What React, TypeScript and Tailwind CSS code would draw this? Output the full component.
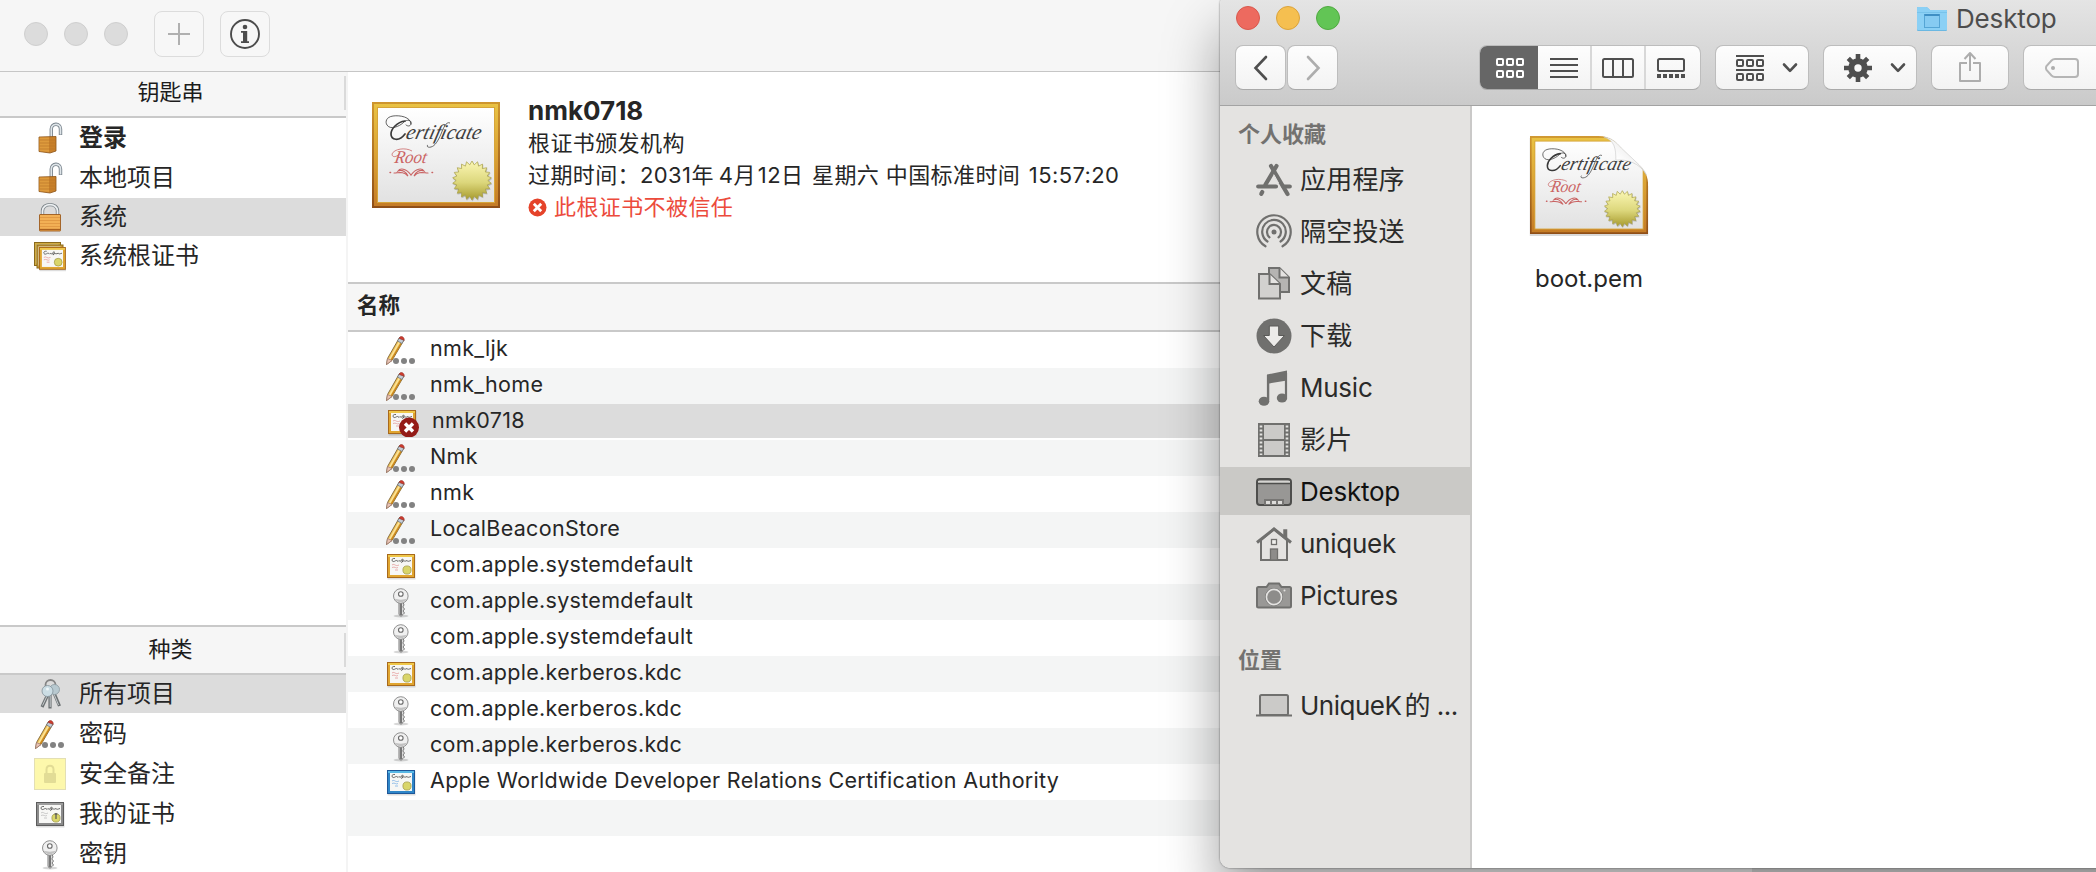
import React from "react";

const FONT = "font-['Inter','Noto_Sans_CJK_SC',sans-serif]";

/* ---------- shared drawings ---------- */

function sealPoints(cx: number, cy: number, r: number, inner: number, n: number) {
  const pts: string[] = [];
  for (let i = 0; i < n * 2; i++) {
    const rad = i % 2 === 0 ? r : inner;
    const a = (Math.PI * i) / n - Math.PI / 2;
    pts.push(`${(cx + rad * Math.cos(a)).toFixed(2)},${(cy + rad * Math.sin(a)).toFixed(2)}`);
  }
  return pts.join(" ");
}

function CertificateArt({ id }: { id: string }) {
  return (
    <>
      <defs>
        <linearGradient id={`${id}f`} x1="0" y1="0" x2="0" y2="1">
          <stop offset="0" stopColor="#e9c243" />
          <stop offset="0.5" stopColor="#dba234" />
          <stop offset="1" stopColor="#c57c26" />
        </linearGradient>
        <linearGradient id={`${id}e`} x1="0" y1="0" x2="0" y2="1">
          <stop offset="0" stopColor="#cf962e" />
          <stop offset="1" stopColor="#8f4e17" />
        </linearGradient>
        <linearGradient id={`${id}p`} x1="0" y1="0" x2="0" y2="1">
          <stop offset="0" stopColor="#ffffff" />
          <stop offset="1" stopColor="#e2e2e2" />
        </linearGradient>
        <linearGradient id={`${id}s`} x1="0" y1="0" x2="0" y2="1">
          <stop offset="0" stopColor="#fbf7b4" />
          <stop offset="0.55" stopColor="#dcd77c" />
          <stop offset="1" stopColor="#a79a2c" />
        </linearGradient>
      </defs>
      <rect width="128" height="106" fill={`url(#${id}e)`} />
      <rect x="2" y="2" width="124" height="102" fill={`url(#${id}f)`} />
      <rect x="5" y="5" width="118" height="96" fill="#d6a53a" />
      <rect x="6" y="6" width="116" height="94" fill={`url(#${id}p)`} />
    </>
  );
}

function CertificateContent({ id }: { id: string }) {
  return (
    <>
      <g fill="none" stroke="#3a3a3a" strokeWidth="0.8" strokeLinecap="round">
        <path d="M39 22C39 15 28 13 21 14C14 15 13 20 15 23C18 28 27 25 32 20C35 17 40 18 39 22C38 25 35 24 34 23" />
        <path d="M33 19C25 20 19 27 19 32C19 38 27 40 33 32" strokeWidth="1.700" />
      </g>
      <g transform="translate(33 37) skewX(-14)">
        <text fontSize="21" fontStyle="italic" fontFamily="Liberation Serif, serif" fill="#3f3f3f" textLength="75" lengthAdjust="spacingAndGlyphs">
          ertificate
        </text>
      </g>
      <path d="M78 21C74 19 71 27 69 32C66 39 63 44 59 45C56 46 54 44 56 43" fill="none" stroke="#444" strokeWidth="0.8" />
      <path d="M40 49C33 45 22 47 20 52C20 56 25 55 27 52" fill="none" stroke="#cb6a6a" strokeWidth="0.8" />
      <g transform="translate(22 61) skewX(-10)">
        <text fontSize="18" fontStyle="italic" fontFamily="Liberation Serif, serif" fill="#cb6464" textLength="32" lengthAdjust="spacingAndGlyphs">
          Root
        </text>
      </g>
      <g fill="none" stroke="#c96363" strokeWidth="1.1" strokeLinecap="round">
        <path d="M39 73C34 66 28 66 26 69C30 67 34 70 36 74C31 69 27 71 22 71" />
        <path d="M39 73C44 66 50 66 52 69C48 67 44 70 42 74C47 69 51 71 56 71" />
        <path d="M18 70.5h.6M60 70.5h.6" strokeWidth="1.4" />
      </g>
      <polygon points={sealPoints(100.5, 79.5, 20, 16.5, 22)} fill="#00000030" />
      <polygon points={sealPoints(100, 78.5, 19.5, 15.8, 22)} fill={`url(#${id}s)`} stroke="#a89f45" strokeWidth="0.7" />
    </>
  );
}

function LargeCertificate() {
  return (
    <svg className="h-[106px] w-[128px] shrink-0" viewBox="0 0 128 106">
      <CertificateArt id="big" />
      <CertificateContent id="big" />
    </svg>
  );
}

function FileCertificate() {
  return (
    <svg className="h-[102px] w-[124px]" viewBox="-3 -1 134 110">
      <defs>
        <clipPath id="fold">
          <path d="M0 0H74C88 0 94 8 100 15L119 33C125 39 128 44 128 54V106H0Z" />
        </clipPath>
        <linearGradient id="curl" x1="0" y1="1" x2="1" y2="0">
          <stop offset="0" stopColor="#d2d2d2" />
          <stop offset="0.35" stopColor="#ffffff" />
          <stop offset="1" stopColor="#dcdcdc" />
        </linearGradient>
      </defs>
      <path d="M0 2H74L128 54V108H0Z" fill="#00000026" />
      <g clipPath="url(#fold)">
        <CertificateArt id="file" />
        <CertificateContent id="file" />
      </g>
      <path d="M80 1C92 5 93 14 93 26C105 25 119 29 126 42C124 37 121 34 118 31L99 13C93 6 88 2 80 1Z" fill="url(#curl)" stroke="#c6c6c6" strokeWidth="0.6" />
    </svg>
  );
}

const certTone = {
  gold: { edge: "#a8691c", frame: "#e0a530", top: "#efc84a", ink: "#e59a9a" },
  blue: { edge: "#1d5799", frame: "#2f86c8", top: "#58b7e4", ink: "#7fb2e6" },
  gray: { edge: "#5c5c5c", frame: "#8b8b8b", top: "#9d9d9d", ink: "#bdbdbd" },
};

function SmallCertArt({ tone = "gold" }: { tone?: "gold" | "blue" | "gray" }) {
  const c = certTone[tone];
  return (
    <>
      <rect x="0.5" y="1" width="28" height="24.5" fill="#00000022" />
      <rect width="28" height="24" fill={c.edge} />
      <rect x="1" y="1" width="26" height="22" fill={c.frame} />
      <rect x="1" y="1" width="26" height="2" fill={c.top} />
      <rect x="3" y="3" width="22" height="18" fill="#f7f7f5" />
      <path d="M8 4.5C5 4 4 6.500 6 7.500C8 8 9 5 11 7.500C12 5.500 13 8 14 7C15 5 16 4 16 6C15 9 14 9 15 7.500C17 6 18 8 20 6.500C21 8 22 7 24 6.500" fill="none" stroke="#555" strokeWidth="0.9" />
      <path d="M5 11C8 9 8 13 12 11M5 13.500C8 12 9 15 11 13.500M8 16h3" fill="none" stroke={c.ink} strokeWidth="0.8" />
      <circle cx="20" cy="16" r="4.100" fill="#d9d56a" stroke="#9c9540" strokeWidth="0.7" />
      {tone === "gray" && <path d="M20 11v6M18.500 12h3" stroke="#555" strokeWidth="1.200" />}
    </>
  );
}

function CertIcon({ tone = "gold" }: { tone?: "gold" | "blue" | "gray" }) {
  return (
    <svg className="h-[32px] w-[32px] shrink-0" viewBox="-2 -4 32 32">
      <SmallCertArt tone={tone} />
    </svg>
  );
}

function BadCertIcon() {
  return (
    <svg className="h-[32px] w-[34px] shrink-0" viewBox="-3 -5 34 32">
      <SmallCertArt />
      <circle cx="21" cy="17.5" r="10" fill="#941b17" />
      <path d="M17 13.500L25 21.500M25 13.500L17 21.500" stroke="#fff" strokeWidth="3.4" />
    </svg>
  );
}

function CertStackIcon() {
  return (
    <svg className="h-[32px] w-[32px] shrink-0" viewBox="0 0 32 32">
      <rect x="0" y="2" width="27" height="24" fill="#8a6a1c" />
      <rect x="1" y="3" width="25" height="22" fill="#d0ac42" />
      <rect x="2.500" y="4.500" width="22" height="19" fill="#eceae2" />
      <rect x="2.500" y="4.500" width="27" height="24" fill="#8a6a1c" />
      <rect x="3.500" y="5.500" width="25" height="22" fill="#c99a34" />
      <rect x="4.500" y="6.500" width="22" height="19" fill="#dcd9cf" />
      <g transform="translate(5 7) scale(0.96 0.95)">
        <SmallCertArt />
      </g>
    </svg>
  );
}

function PasswordIcon() {
  return (
    <svg className="h-[32px] w-[32px] shrink-0" viewBox="0 0 32 32">
      <path d="M2.500 24.500L14.500 3.500L19 6L7 26.500L1.500 30.500Z" fill="#f0c25a" stroke="#7d6332" strokeWidth="0.9" strokeLinejoin="round" />
      <path d="M4.500 25.500L15.500 6" stroke="#fbe59b" strokeWidth="1.500" />
      <path d="M6.200 26.200L17.500 7" stroke="#c8851c" strokeWidth="1.400" />
      <path d="M2.500 24.500L7 26.500L1.500 30.500Z" fill="#e9c4b4" stroke="#9a7470" strokeWidth="0.7" />
      <path d="M12.500 7L14.500 3.500L19 6L17 9.500Z" fill="#c3ccd6" stroke="#6e7680" strokeWidth="0.800" />
      <path d="M14.300 4.500C14.500 1.500 19.500 2 19.200 6.300Z" fill="#d23a2c" stroke="#93382f" strokeWidth="0.700" />
      <circle cx="11" cy="27" r="3" fill="#828282" />
      <circle cx="19" cy="27" r="3" fill="#828282" />
      <circle cx="27" cy="27" r="3" fill="#828282" />
    </svg>
  );
}

function KeyIcon() {
  return (
    <svg className="h-[32px] w-[32px] shrink-0" viewBox="0 0 32 32">
      <ellipse cx="16" cy="30" rx="7.500" ry="1.500" fill="#00000028" />
      <path d="M14 16V28.500L16 30.300L18 28.500L19.500 27L18 25L19.500 23L17.800 21L19 19L18 16Z" fill="#dedede" stroke="#6c6c6c" strokeWidth="0.900" />
      <path d="M16 17V29" stroke="#3f3f3f" strokeWidth="1.300" />
      <circle cx="15.800" cy="10" r="7.300" fill="#f0f0f0" stroke="#858585" strokeWidth="0.900" />
      <path d="M9.500 12.500C12 17.500 19.500 17.500 22 12.500C19 14 13 14 9.500 12.500Z" fill="#c2c2c2" />
      <circle cx="15.800" cy="8" r="2.300" fill="#ffffff" stroke="#6a6a6a" strokeWidth="1.100" />
    </svg>
  );
}

function KeysIcon() {
  return (
    <svg className="h-[32px] w-[32px] shrink-0" viewBox="0 0 32 32">
      <circle cx="16.500" cy="7" r="5" fill="none" stroke="#858585" strokeWidth="1.800" />
      <g stroke="#6d7274" strokeWidth="3.200">
        <path d="M14 16L8 29" />
        <path d="M16 16V30.500" />
        <path d="M20 15L25.500 28" />
      </g>
      <g stroke="#c6cbcd" strokeWidth="1">
        <path d="M13.500 17L8.500 27.500M16.200 17V29M20 16L24.500 27" />
      </g>
      <circle cx="20.500" cy="11.500" r="5" fill="#b8c9d0" stroke="#8c999f" strokeWidth="0.800" />
      <circle cx="13.500" cy="13" r="5.500" fill="#cbdde4" stroke="#83929a" strokeWidth="0.800" />
      <circle cx="13.500" cy="11" r="1.500" fill="#eef5f8" />
    </svg>
  );
}

function LockIcon({ open = false }: { open?: boolean }) {
  return (
    <svg className="h-[34px] w-[32px] shrink-0" viewBox="0 0 32 34">
      {open ? (
        <>
          <path d="M17.300 17V8C17.300 2 26.500 1.500 26.500 8V14" fill="none" stroke="#76818a" strokeWidth="3.400" />
          <path d="M17.300 17V8C17.300 2 26.500 1.500 26.500 8V13.600" fill="none" stroke="#dfe5e9" strokeWidth="1.700" />
          <path d="M5 16L22 15.500V30L16 32L5 30.500Z" fill="#c8802a" stroke="#8c5318" strokeWidth="0.800" />
          <path d="M5.500 16.500H15V31L5.500 30Z" fill="#dd9a3c" />
          <path d="M5.500 19H21.500M5.500 22H21.500M5.500 25H21.500M5.500 28H21.500" stroke="#b9752a" strokeWidth="0.700" />
        </>
      ) : (
        <>
          <path d="M8.500 16V11C8.500 2.500 23.500 2.500 23.500 11V16" fill="none" stroke="#7c8489" strokeWidth="3.400" />
          <path d="M8.500 16V11C8.500 2.500 23.500 2.500 23.500 11V16" fill="none" stroke="#edf0f2" strokeWidth="1.700" />
          <rect x="5.500" y="14.500" width="21" height="16.500" rx="0.500" fill="#f2b055" stroke="#9c5a1c" strokeWidth="0.900" />
          <path d="M6 17.500H26M6 20.500H26M6 23.500H26M6 26.500H26" stroke="#dd9440" strokeWidth="0.800" />
          <path d="M6 29.500H26" stroke="#a9601f" strokeWidth="1.300" />
        </>
      )}
    </svg>
  );
}

function NoteIcon() {
  return (
    <svg className="h-[32px] w-[32px] shrink-0" viewBox="0 0 32 32">
      <rect x="0.500" y="0.500" width="31" height="31" fill="#fdf8ac" stroke="#e3dfb4" />
      <rect x="10" y="15" width="12" height="10" rx="1" fill="#e2dc96" />
      <path d="M12.500 15V11.500C12.500 6.500 19.500 6.500 19.500 11.500V15" fill="none" stroke="#e2dc96" strokeWidth="2" />
    </svg>
  );
}

/* ---------- keychain window ---------- */

type Item = { icon: React.ReactNode; label: string; selected?: boolean };

const keychains: (Item & { bold?: boolean; h: string })[] = [
  { icon: <LockIcon open />, label: "登录", bold: true, h: "h-[40px]" },
  { icon: <LockIcon open />, label: "本地项目", h: "h-[40px]" },
  { icon: <LockIcon />, label: "系统", selected: true, h: "h-[38px]" },
  { icon: <CertStackIcon />, label: "系统根证书", h: "h-[40px]" },
];

const categories: Item[] = [
  { icon: <PasswordIcon />, label: "密码" },
  { icon: <NoteIcon />, label: "安全备注" },
  { icon: <CertIcon tone="gray" />, label: "我的证书" },
  { icon: <KeyIcon />, label: "密钥" },
];

const entries: Item[] = [
  { icon: <PasswordIcon />, label: "nmk_ljk" },
  { icon: <PasswordIcon />, label: "nmk_home" },
  { icon: <BadCertIcon />, label: "nmk0718", selected: true },
  { icon: <PasswordIcon />, label: "Nmk" },
  { icon: <PasswordIcon />, label: "nmk" },
  { icon: <PasswordIcon />, label: "LocalBeaconStore" },
  { icon: <CertIcon />, label: "com.apple.systemdefault" },
  { icon: <KeyIcon />, label: "com.apple.systemdefault" },
  { icon: <KeyIcon />, label: "com.apple.systemdefault" },
  { icon: <CertIcon />, label: "com.apple.kerberos.kdc" },
  { icon: <KeyIcon />, label: "com.apple.kerberos.kdc" },
  { icon: <KeyIcon />, label: "com.apple.kerberos.kdc" },
  { icon: <CertIcon tone="blue" />, label: "Apple Worldwide Developer Relations Certification Authority" },
];

function PaneHeader({ title }: { title: string }) {
  return (
    <div className="flex h-[46px] shrink-0 items-start border-b-2 border-[#c9c9c9] bg-[#f6f6f6] pt-[4px]">
      <div className="flex-1 pr-[3px] text-center text-[22px] leading-[32px] text-[#1c1c1c]">{title}</div>
      <div className="h-[34px] w-[2px] bg-[#dadada]" />
    </div>
  );
}

function KeychainWindow() {
  return (
    <div className="flex h-[872px] w-[1752px] flex-col bg-white">
      <div className="flex h-[72px] shrink-0 items-start border-b border-[#c6c6c6] bg-[#f6f6f6] pt-[11px] pl-[24px]">
        <div className="flex gap-[16px] pt-[11px]">
          <div className="size-[24px] rounded-full border border-[#cfcfcf] bg-[#dcdcdc]" />
          <div className="size-[24px] rounded-full border border-[#cfcfcf] bg-[#dcdcdc]" />
          <div className="size-[24px] rounded-full border border-[#cfcfcf] bg-[#dcdcdc]" />
        </div>
        <div className="ml-[26px] flex h-[46px] w-[50px] items-center justify-center rounded-[8px] border border-[#dcdcdc] bg-[#f7f7f7]">
          <svg className="size-[24px]" viewBox="0 0 24 24">
            <path d="M12 1V23M1 12H23" stroke="#b0b0b0" strokeWidth="2" />
          </svg>
        </div>
        <div className="ml-[16px] flex h-[46px] w-[50px] items-center justify-center rounded-[8px] border border-[#dcdcdc] bg-[#f7f7f7]">
          <svg className="size-[30px]" viewBox="0 0 30 30">
            <circle cx="15" cy="15" r="14" fill="none" stroke="#4c4c4c" strokeWidth="1.900" />
            <circle cx="15" cy="8" r="2.300" fill="#4c4c4c" />
            <path d="M11 12H17.200V22.200H19V24H11V22.200H13V13.800H11Z" fill="#4c4c4c" />
          </svg>
        </div>
      </div>
      <div className="flex min-h-0 flex-1">
        <div className="flex w-[346px] shrink-0 flex-col">
          <PaneHeader title="钥匙串" />
          <div className="h-[507px] shrink-0">
            {keychains.map((k) => (
              <div key={k.label} className={`flex items-center pl-[34px] ${k.h} ${k.selected ? "bg-[#dcdcdc]" : ""}`}>
                {k.icon}
                <span className={`ml-[13px] text-[24px] leading-[36px] text-[#262626] ${k.bold ? "font-bold" : ""}`}>{k.label}</span>
              </div>
            ))}
          </div>
          <div className="border-t-2 border-[#c9c9c9]">
            <div className="bg-[#f6f6f6] pt-[2px]">
              <PaneHeader title="种类" />
            </div>
          </div>
          <div className="mb-px flex h-[38px] shrink-0 items-center bg-[#dcdcdc] pl-[34px]">
            <KeysIcon />
            <span className="ml-[13px] text-[24px] leading-[36px] text-[#262626]">所有项目</span>
          </div>
          {categories.map((c) => (
            <div key={c.label} className="flex h-[40px] shrink-0 items-center pl-[34px]">
              {c.icon}
              <span className="ml-[13px] text-[24px] leading-[36px] text-[#262626]">{c.label}</span>
            </div>
          ))}
        </div>
        <div className="w-[2px] shrink-0 bg-[#f4f4f4]" />
        <div className="flex min-w-0 flex-1 flex-col">
          <div className="flex h-[210px] shrink-0 pt-[30px] pl-[24px]">
            <LargeCertificate />
            <div className="-mt-[7px] ml-[28px] text-[#262626]">
              <div className="h-[32px] text-[26px] leading-[32px] font-bold">nmk0718</div>
              <div className="text-[22px] leading-[32px] tracking-[0.400px]">根证书颁发机构</div>
              <div className="text-[22px] leading-[32px] tracking-[0.400px]">
                过期时间：2031年<span className="ml-[5px]">4月</span>
                <span className="ml-[2px]">12日</span> <span className="ml-[2px]">星期六</span> 中国标准时间 <span className="ml-[2px]">15:57:20</span>
              </div>
              <div className="flex items-center text-[22px] leading-[32px] tracking-[0.400px] text-[#ec4b3c]">
                <svg className="mr-[7px] size-[19px]" viewBox="0 0 19 19">
                  <circle cx="9.500" cy="9.500" r="9" fill="#e5432a" />
                  <path d="M5.800 5.800L13.200 13.200M13.200 5.800L5.800 13.200" stroke="#fff" strokeWidth="2.800" />
                </svg>
                此根证书不被信任
              </div>
            </div>
          </div>
          <div className="flex h-[50px] shrink-0 items-center border-y-2 border-[#c9c9c9] bg-[#f6f6f6] pb-[3px] pl-[9px] text-[21.500px] font-semibold text-[#262626]">名称</div>
          {entries.map((e, i) => (
            <div key={i} className="h-[36px] shrink-0">
              <div
                className={`flex items-center pl-[37px] ${
                  e.selected ? "h-[34px] bg-[#dcdcdc]" : i % 2 === 1 ? "h-[36px] bg-[#f4f5f5]" : "h-[36px]"
                }`}
              >
                {e.icon}
                <span className={`ml-[13px] text-[21.500px] leading-[30px] tracking-[0.300px] text-[#262626] ${e.selected ? "-mt-[2px]" : "-mt-[5px]"}`}>{e.label}</span>
              </div>
            </div>
          ))}
          <div className="h-[36px] shrink-0 bg-[#f4f5f5]" />
        </div>
      </div>
    </div>
  );
}

/* ---------- finder window ---------- */

const G = "#70706e";

function SideIcon({ children }: { children: React.ReactNode }) {
  return (
    <svg className="size-[36px] shrink-0" viewBox="0 0 36 36">
      {children}
    </svg>
  );
}

const favorites: Item[] = [
  {
    label: "应用程序",
    icon: (
      <SideIcon>
        <g stroke={G} strokeWidth="4.200" strokeLinecap="round" fill="none">
          <path d="M20.500 4L9.500 22.500" />
          <path d="M15 4L31.500 32" />
          <path d="M2.200 24.500H20M27.500 24.500H33.800" />
          <path d="M6.300 30L5.300 31.800" />
        </g>
        <path d="M17.800 12.500L22.500 21" stroke="#e4e3e1" strokeWidth="1" />
      </SideIcon>
    ),
  },
  {
    label: "隔空投送",
    icon: (
      <SideIcon>
        <g fill="none" stroke={G} strokeWidth="2.200" strokeLinecap="round">
          <path d="M9.500 32.300A16.700 16.700 0 1 1 26.500 32.300" />
          <path d="M11.500 27.500A11.800 11.800 0 1 1 24.500 27.500" />
          <path d="M13.500 23.300A7 7 0 1 1 22.500 23.300" />
        </g>
        <circle cx="18" cy="18" r="2.500" fill={G} />
      </SideIcon>
    ),
  },
  {
    label: "文稿",
    icon: (
      <SideIcon>
        <g stroke={G} strokeWidth="2" strokeLinejoin="miter">
          <path d="M13 2H23.500L33 11.500V26H13Z" fill="#b5b4b2" />
          <path d="M23.500 2V11.500H33" fill="#e4e3e1" />
          <path d="M3 8H13.500L24 18V32.500H3Z" fill="#d2d1cf" />
          <path d="M13.500 8V18H24" fill="#e4e3e1" />
        </g>
      </SideIcon>
    ),
  },
  {
    label: "下载",
    icon: (
      <SideIcon>
        <circle cx="18" cy="18" r="17.500" fill="#70706e" />
        <path d="M13.300 8H22.700V17.500H28.500L18 29L7.500 17.500H13.300Z" fill="#ecebe9" stroke="#5a5a58" strokeWidth="1" />
      </SideIcon>
    ),
  },
  {
    label: "Music",
    icon: (
      <SideIcon>
        <path d="M11 4.500L31 0.500V10.500L13.200 13.500V30.500H11Z" fill={G} />
        <path d="M12 5V30M30 3V27" stroke={G} strokeWidth="2.200" />
        <ellipse cx="8" cy="31.200" rx="5.300" ry="4.500" fill={G} />
        <ellipse cx="26" cy="28" rx="5.200" ry="4.500" fill={G} />
      </SideIcon>
    ),
  },
  {
    label: "影片",
    icon: (
      <SideIcon>
        <rect x="2" y="1" width="32" height="34" fill={G} />
        <path d="M8 3H28V17H8ZM8 19H28V33H8Z" fill="#cbcac8" />
        <path d="M5 3.500V33" stroke="#e4e3e1" strokeWidth="2.600" strokeDasharray="2 2" />
        <path d="M31 3.500V33" stroke="#e4e3e1" strokeWidth="2.600" strokeDasharray="2 2" />
      </SideIcon>
    ),
  },
  {
    label: "Desktop",
    selected: true,
    icon: (
      <SideIcon>
        <rect x="1" y="5" width="34" height="26" rx="3" fill="#989795" stroke="#4e4e4c" strokeWidth="2" />
        <path d="M2 8H34" stroke="#d5d4d1" strokeWidth="2" />
        <path d="M1 9.500H35" stroke="#4e4e4c" strokeWidth="1.500" />
        <rect x="8" y="25" width="20" height="6" fill="#777674" />
        <path d="M10 27h4v3h-4zM16 27h4v3h-4zM22 27h4v3h-4z" fill="#dddcda" />
      </SideIcon>
    ),
  },
  {
    label: "uniquek",
    icon: (
      <SideIcon>
        <path d="M28 4H30.500V12L28 9Z" fill={G} stroke={G} strokeWidth="1.500" />
        <path d="M5 14V34H31V14L18 3Z" fill="#e4e3e1" stroke={G} strokeWidth="2" />
        <path d="M1 16.500L18 3L35 16.500" fill="none" stroke={G} strokeWidth="3" />
        <rect x="15.500" y="13.500" width="5" height="5" fill="#f0f0ee" stroke={G} strokeWidth="1.300" />
        <rect x="14.500" y="23" width="7" height="11" fill="#8d8c8a" stroke={G} strokeWidth="1.300" />
      </SideIcon>
    ),
  },
  {
    label: "Pictures",
    icon: (
      <SideIcon>
        <path d="M2.500 9H10.500L13 5.500H23L25.500 9H33.500Q35 9 35 10.500V28Q35 29.500 33.500 29.500H2.500Q1 29.500 1 28V10.500Q1 9 2.500 9Z" fill="#999896" stroke={G} strokeWidth="2" />
        <circle cx="18" cy="19" r="9" fill={G} />
        <circle cx="18" cy="19" r="7.600" fill="#8d8c8a" stroke="#e4e3e1" strokeWidth="1.600" />
        <circle cx="28.500" cy="12.500" r="1" fill="#e4e3e1" />
      </SideIcon>
    ),
  },
];

const BTN =
  "flex h-[45px] items-center rounded-[8px] border border-[#bdbdbd] border-b-[#a9a9a9] bg-linear-to-b from-[#fdfdfd] to-[#f3f3f3]";

function Down() {
  return (
    <svg className="h-[12px] w-[16px]" viewBox="0 0 16 12">
      <path d="M2 2.500L8 8.800L14 2.500" fill="none" stroke="#4f4f4f" strokeWidth="2.600" strokeLinecap="round" strokeLinejoin="round" />
    </svg>
  );
}

function SixBoxes({ y1, y2, color, h }: { y1: number; y2: number; color: string; h: number }) {
  return (
    <g fill="none" stroke={color} strokeWidth="2">
      {[1, 11, 21].map((x) => (
        <React.Fragment key={x}>
          <rect x={x} y={y1} width="6" height={h} rx="1" />
          <rect x={x} y={y2} width="6" height={h} rx="1" />
        </React.Fragment>
      ))}
    </g>
  );
}

function FinderToolbar() {
  return (
    <div className="flex h-[112px] shrink-0 flex-col border-b border-[#a3a3a3] bg-linear-to-b from-[#e6e6e6] to-[#cacaca]">
      <div className="flex h-[50px] items-start pt-[12px] pl-[16px]">
        <div className="flex gap-[16px]">
          <div className="size-[24px] rounded-full border border-[#d9584d] bg-[#ed6a5f]" />
          <div className="size-[24px] rounded-full border border-[#dba33b] bg-[#f5bf50]" />
          <div className="size-[24px] rounded-full border border-[#50aa41] bg-[#62c555]" />
        </div>
        <svg className="ml-[577px] h-[26px] w-[30px] shrink-0" viewBox="0 0 30 26">
          <path d="M0 2Q0 1 1 1H9Q10 1 11 2L13 4H29Q30 4 30 5V24Q30 25 29 25H1Q0 25 0 24Z" fill="#6bb8e2" />
          <path d="M0 2Q0 1 1 1H9Q10 1 11 2L13 4H29Q30 4 30 5V23.500Q30 24 29 24H1Q0 24 0 23Z" fill="#8bd0f5" />
          <path d="M0 6.500H30" stroke="#74bfe8" strokeWidth="0.800" />
          <rect x="7.500" y="8.500" width="15" height="13" fill="#86cbf2" stroke="#55a5d5" strokeWidth="1" />
          <path d="M7.500 9H22.500" stroke="#3f8fc4" strokeWidth="2" />
        </svg>
        <div className="-mt-[3px] ml-[9px] text-[26px] leading-[32px] tracking-[-0.150px] text-[#4d4d4d]">Desktop</div>
      </div>
      <div className="flex pt-px pl-[15px]">
        <div className={`${BTN} w-[51px] justify-center`}>
          <svg className="h-[26px] w-[16px]" viewBox="0 0 16 26">
            <path d="M13 2L2.500 13L13 24" fill="none" stroke="#4f4f4f" strokeWidth="2.600" strokeLinecap="round" />
          </svg>
        </div>
        <div className={`${BTN} ml-px w-[51px] justify-center`}>
          <svg className="h-[26px] w-[16px]" viewBox="0 0 16 26">
            <path d="M3 2L13.500 13L3 24" fill="none" stroke="#adadad" strokeWidth="2.600" strokeLinecap="round" />
          </svg>
        </div>
        <div className={`${BTN} ml-[141px] w-[222px] overflow-hidden`}>
          <div className="-my-px -ml-px flex h-[45px] w-[59px] items-center justify-center bg-[#666666]">
            <svg className="ml-[3px] h-[22px] w-[28px]" viewBox="0 0 28 22">
              <SixBoxes y1={2} y2={14} color="#fff" h={6} />
            </svg>
          </div>
          <div className="flex h-full w-[54px] items-center justify-center border-r-2 border-[#d8d8d8]">
            <svg className="-ml-[1px] h-[22px] w-[28px]" viewBox="0 0 28 22">
              <path d="M0 2H28M0 8H28M0 14H28M0 20H28" stroke="#4f4f4f" strokeWidth="2" />
            </svg>
          </div>
          <div className="flex h-full w-[54px] items-center justify-center border-r-2 border-[#d8d8d8]">
            <svg className="h-[22px] w-[32px]" viewBox="0 0 32 22">
              <rect x="1" y="2" width="30" height="18" rx="1.500" fill="none" stroke="#4f4f4f" strokeWidth="2" />
              <path d="M11 2V20M21 2V20" stroke="#4f4f4f" strokeWidth="2" />
            </svg>
          </div>
          <div className="flex flex-1 items-center justify-center">
            <svg className="-ml-[5px] h-[22px] w-[28px]" viewBox="0 0 28 22">
              <rect x="1" y="2" width="26" height="12" rx="1.500" fill="none" stroke="#4f4f4f" strokeWidth="2" />
              <path d="M0 17h4v4h-4zM6 17h4v4h-4zM12 17h4v4h-4zM18 17h4v4h-4zM24 17h4v4h-4z" fill="#4f4f4f" />
            </svg>
          </div>
        </div>
        <div className={`${BTN} ml-[14px] w-[94px] pl-[20px]`}>
          <svg className="h-[28px] w-[28px]" viewBox="0 0 28 28">
            <path d="M0 2H28M0 16H28" stroke="#4f4f4f" strokeWidth="2" />
            <SixBoxes y1={6} y2={20} color="#4f4f4f" h={6} />
          </svg>
          <span className="ml-[18px]"><Down /></span>
        </div>
        <div className={`${BTN} ml-[14px] w-[94px] pl-[20px]`}>
          <svg className="h-[28px] w-[28px]" viewBox="-14 -14 28 28">
            <g stroke="#4f4f4f" strokeWidth="4.600">
              <path d="M0 -14V14M-14 0H14M-9.700 -9.700L9.700 9.700M-9.700 9.700L9.700 -9.700" />
            </g>
            <circle r="9.800" fill="#4f4f4f" />
            <circle r="3.700" fill="#f9f9f9" />
          </svg>
          <span className="ml-[18px]"><Down /></span>
        </div>
        <div className={`${BTN} ml-[14px] w-[78px] justify-center`}>
          <svg className="-mt-[2px] h-[32px] w-[22px]" viewBox="0 0 22 32">
            <path d="M8 12H1V30H21V12H14M11 20V2M5.500 8L11 2L16.500 8" fill="none" stroke="#adadad" strokeWidth="2" strokeLinejoin="round" />
          </svg>
        </div>
        <div className={`${BTN} ml-[14px] w-[94px] pl-[21px]`}>
          <svg className="h-[20px] w-[34px]" viewBox="0 0 34 20">
            <path d="M10 1H30Q33 1 33 4V16Q33 19 30 19H10Q8 19 6.500 17.500L1.500 12Q0.500 10 1.500 8L6.500 2.500Q8 1 10 1Z" fill="none" stroke="#b5b5b5" strokeWidth="2" />
            <circle cx="8" cy="10" r="2" fill="#adadad" />
          </svg>
        </div>
      </div>
    </div>
  );
}

function FinderWindow() {
  return (
    <div className="absolute top-[-6px] left-[1220px] flex h-[874px] w-[1100px] flex-col overflow-hidden rounded-[10px] bg-white shadow-[0_36px_56px_rgba(0,0,0,0.38),0_0_2px_rgba(0,0,0,0.6)]">
      <FinderToolbar />
      <div className="flex min-h-0 flex-1">
        <div className="w-[252px] shrink-0 border-r-2 border-[#cac9c8] bg-[#e4e3e1]">
          <div className="mt-[12px] pl-[18px] text-[22px] leading-[32px] font-semibold text-[#737270]">个人收藏</div>
          <div className="mt-[4px]">
            {favorites.map((f) => (
              <div key={f.label} className="h-[52px] pt-px pb-[3px]">
                <div className={`flex h-[48px] items-center pt-px pl-[36px] ${f.selected ? "-mr-[2px] bg-[#cac9c6] text-[#111]" : "text-[#2b2b2a]"}`}>
                  {f.icon}
                  <span className={`ml-[8px] text-[26px] leading-[40px] ${f.label < "~" ? "tracking-[-0.250px]" : "tracking-[0.200px]"}`}>{f.label}</span>
                </div>
              </div>
            ))}
          </div>
          <div className="mt-[22px] pl-[18px] text-[22px] leading-[32px] font-semibold text-[#737270]">位置</div>
          <div className="mt-[6px] flex h-[48px] items-center pl-[36px] text-[#2b2b2a]">
            <SideIcon>
              <rect x="4" y="7" width="28" height="20" rx="1.500" fill="#cbcac8" stroke={G} strokeWidth="2" />
              <path d="M0 27.500H36" stroke={G} strokeWidth="2" />
            </SideIcon>
            <span className="ml-[8px] text-[26px] leading-[40px] tracking-[-0.500px] whitespace-nowrap">
              UniqueK<span className="ml-[3px]">的</span> ...
            </span>
          </div>
        </div>
        <div className="flex-1 pt-[29px] pl-[55px]">
          <div className="flex w-[124px] flex-col items-center">
            <FileCertificate />
            <div className="mt-[26px] text-[24px] leading-[32px] text-[#262626]">boot.pem</div>
          </div>
        </div>
      </div>
    </div>
  );
}

export default function App() {
  return (
    <div className={`relative h-[872px] w-[2096px] overflow-hidden bg-[#e6e6e6] ${FONT}`}>
      <KeychainWindow />
      <FinderWindow />
    </div>
  );
}
